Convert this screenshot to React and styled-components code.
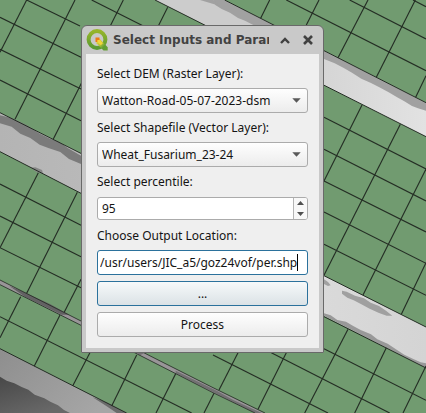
import React from "react";
import styled, { createGlobalStyle, css } from "styled-components";

const GlobalStyle = createGlobalStyle`
  html, body, #root { margin: 0; height: 100%; }
  body { overflow: hidden; background: #719b70; }
  *, *::before, *::after { box-sizing: border-box; }
`;

const Desktop = styled.div`
  position: relative;
  isolation: isolate;
  min-height: 100%;
  padding: 25px 102px 60px 81px;
  font: 12px/17px "Noto Sans", sans-serif;
  color: #141414;
`;

const MapCanvas = styled.svg`
  position: absolute;
  inset: 0;
  z-index: -1;
  width: 100%;
  height: 100%;
  background: #719b70;
`;

const Dialog = styled.form`
  display: flex;
  flex-direction: column;
  padding: 0 4px 4px;
  border: 1px solid #696969;
  border-radius: 6px 6px 1px 1px;
  background: #c9c9c9;
`;

const TitleBar = styled.header`
  display: flex;
  align-items: center;
  height: 28px;
`;

const Logo = styled.svg`
  flex: none;
  width: 22px;
  height: 22px;
`;

const Title = styled.h1`
  flex: 1;
  min-width: 0;
  margin: 0 4px 0 5px;
  overflow: hidden;
  white-space: nowrap;
  font: bold 12px/18px "DejaVu Sans", sans-serif;
  color: #424242;
`;

const WindowButton = styled.button`
  display: flex;
  align-items: center;
  justify-content: center;
  width: 23px;
  height: 22px;
  padding: 0;
  border: 0;
  background: none;
  color: #414141;
`;

const Content = styled.div`
  display: flex;
  flex-direction: column;
  gap: 6px;
  padding: 11px;
  background: #efefef;
`;

const Label = styled.label`
  height: 17px;
  white-space: nowrap;
`;

const frame = css`
  border: 1px solid #ababab;
  border-radius: 3px;
  font: inherit;
  color: inherit;
  outline: none;
`;

const SelectBox = styled.div`
  position: relative;
  display: flex;
`;

const Select = styled.select`
  ${frame}
  flex: 1;
  min-width: 0;
  height: 25px;
  padding: 0 24px 0 4px;
  appearance: none;
  background: linear-gradient(#fefefe, #ececec);
`;

const SelectArrow = styled.svg`
  position: absolute;
  right: 7px;
  top: 10px;
  width: 9px;
  height: 5px;
  pointer-events: none;
`;

const SpinBox = styled.div`
  ${frame}
  display: flex;
  height: 23px;
  margin: 1px 0;
  overflow: hidden;
  background: #fff;
`;

const SpinInput = styled.input`
  flex: 1;
  min-width: 0;
  padding: 0 4px;
  border: 0;
  background: none;
  font: inherit;
  color: inherit;
  outline: none;
`;

const SpinButtons = styled.div`
  display: flex;
  flex-direction: column;
  width: 14px;
  border-left: 1px solid #b4b4b4;
  background: #f8f8f8;
`;

const SpinButton = styled.button`
  display: flex;
  flex: 1;
  align-items: center;
  justify-content: center;
  padding: 0;
  border: 0;
  background: none;
`;

const PathBox = styled.div`
  position: relative;
  display: flex;
`;

const PathInput = styled.input`
  ${frame}
  flex: 1;
  min-width: 0;
  height: 25px;
  padding: 0 2px;
  border-color: #2b719c;
  background: #fff;
  caret-color: transparent;
`;

const Caret = styled.span`
  position: absolute;
  top: 4px;
  right: 10px;
  width: 1px;
  height: 17px;
  background: #000;
`;

const Button = styled.button`
  ${frame}
  height: 25px;
  padding: 0;
  text-align: center;
  background: ${(p) =>
    p.$active ? "linear-gradient(#f6f9fa, #dbe2e6)" : "linear-gradient(#fefefe, #ececec)"};
  border-color: ${(p) => (p.$active ? "#2b719c" : "#ababab")};
`;

// Plot grid lines, three units per pixel: [x1, y1, x2, y2]
const gridLines = [
  // west field, along the rows
  [80, 0, 240, 78], [275, 0, 430, 78], [0, 52, 243, 172], [0, 148, 243, 267], [0, 240, 243, 362],
  // west field, across
  [80, 0, 0, 157], [225, 0, 45, 358], [370, 0, 160, 417], [503, 22, 470, 88],
  // north-east field
  [859, 0, 1278, 212], [1049, 0, 1278, 117], [1239, 0, 1278, 20],
  [809, 0, 782, 55], [957, 0, 919, 75], [1104, 0, 1014, 173], [1246, 0, 1129, 232], [1278, 227, 1247, 292],
  // east field
  [972, 352, 1278, 507], [972, 448, 1278, 603], [972, 543, 1278, 696], [972, 636, 1278, 790], [972, 733, 1278, 886],
  [1086, 315, 972, 543], [1201, 373, 972, 826], [1278, 507, 1089, 885], [1278, 788, 1204, 943],
  // south-west field
  [0, 552, 243, 676], [0, 648, 243, 770], [0, 743, 243, 863],
  [115, 518, 0, 743], [232, 577, 80, 880], [243, 838, 193, 936],
  // south-east field
  [639, 1065, 984, 1239], [814, 1058, 1169, 1239], [972, 1046, 1278, 1201],
  [714, 1058, 657, 1170], [859, 1058, 774, 1228], [1044, 988, 914, 1239], [1159, 1043, 1064, 1239], [1278, 1098, 1209, 1239],
  // southern strip
  [0, 950, 575, 1239],
  [62, 890, 0, 1013], [180, 945, 103, 1098], [300, 1000, 218, 1158], [410, 1065, 335, 1218], [527, 1121, 468, 1239], [642, 1180, 612, 1239],
];

const FieldMap = () => (
  <MapCanvas viewBox="0 0 1278 1239" preserveAspectRatio="xMinYMin slice" aria-hidden="true">
    <defs>
      <linearGradient id="northTrack"><stop offset=".35" stopColor="#ccc" /><stop offset="1" stopColor="#e2e2e2" /></linearGradient>
      <linearGradient id="midTrack"><stop offset="0" stopColor="#b4b4b4" /><stop offset=".2" stopColor="#b9b9b9" /><stop offset=".75" stopColor="#dadada" /><stop offset="1" stopColor="#d4d4d4" /></linearGradient>
      <linearGradient id="corner" x1="0" y1="0" x2="1" y2=".5"><stop offset="0" stopColor="#8e8e8e" /><stop offset="1" stopColor="#a6a6a6" /></linearGradient>
      <linearGradient id="shade" x1="0" y1="0" x2=".6" y2="1"><stop offset="0" stopColor="#484848" /><stop offset="1" stopColor="#686868" /></linearGradient>
    </defs>
    <path d="M465 0H674L1278 308V410Z" fill="url(#northTrack)" />
    <path d="M639 0H674L1278 308V332L1254 325 1236 318 1213 304 1190 291 1166 277 1138 262 1113 249 1084 236 1056 218 1030 203 1004 190 972 177 760 75 735 62 714 54 690 38 665 27 646 15Z" fill="#a1a1a1" />
    <path d="M600 0H639L660 18Z" fill="#a1a1a1" />
    <path d="M0 338 243 460 972 827 1278 981V1103L972 947 243 580 0 455Z" fill="url(#midTrack)" />
    <path d="M0 346 35 354 80 375 116 399 150 416 176 424 203 444 243 467V492L207 477 181 456 145 444 119 434 91 414 61 401 35 380 0 370Z" fill="#7b7b7b" />
    <path d="M91 503 106 502 126 510 130 523 111 517Z" fill="#878787" />
    <path d="M972 838 984 846 992 856 984 858 972 852ZM1026 872 1040 875 1065 887 1092 895 1112 908 1137 918 1158 932 1177 947 1160 947 1137 939 1109 926 1084 913 1061 901 1042 893 1026 881Z" fill="#a0a0a0" />
    <path d="M972 947V940L992 946 1012 960 1038 965 1061 979 1082 990 1113 1003 1132 1018 1163 1031 1190 1049 1213 1064 1240 1077 1262 1087 1278 1090V1105Z" fill="#999" />
    <path d="M0 840 243 963 639 1163 792 1239H765L639 1178 243 976 0 854Z" fill="#999598" />
    <path d="M28 858 65 873 150 912 208 944 185 944 75 890Z" fill="#636163" />
    <path d="M400 1050 432 1060 420 1066ZM527 1112 650 1172 700 1200 785 1239H765L527 1120Z" fill="#727072" />
    <path d="M0 1046 380 1239H0Z" fill="url(#corner)" />
    <path d="M0 1130 20 1142 43 1150 65 1161 85 1169 104 1184 133 1195 151 1205 174 1216 192 1230 210 1239H0Z" fill="url(#shade)" />
    <path d="M278 1192 320 1207 380 1239H350L320 1219Z" fill="#6b6b6b" />
    <g stroke="#242d24" strokeWidth="3.4" fill="none">
      <path d="M465 0 1278 410M674 0 1278 308M0 338 1278 981M0 455 243 580 972 950 1278 1104M0 1046 380 1239" strokeWidth="3" />
      <path d="M0 840 243 963 639 1163 795 1239M0 854 243 976 639 1178 765 1239" strokeWidth="2.5" />
      {gridLines.map(([x1, y1, x2, y2]) => (
        <line key={`${x1}-${y1}-${x2}-${y2}`} x1={x1} y1={y1} x2={x2} y2={y2} />
      ))}
    </g>
  </MapCanvas>
);

const QgisLogo = () => (
  <Logo viewBox="0 0 22 22" aria-hidden="true">
    <defs>
      <linearGradient id="ring" x1="0" y1="0" x2="0" y2="1"><stop offset="0" stopColor="#96b52b" /><stop offset="1" stopColor="#5b9a32" /></linearGradient>
      <linearGradient id="tail" x1="0" y1="0" x2="1" y2="1"><stop offset="0" stopColor="#f4d936" /><stop offset=".4" stopColor="#b9c33a" /><stop offset=".65" stopColor="#5f9d35" /><stop offset="1" stopColor="#679f36" /></linearGradient>
    </defs>
    <circle cx="11" cy="10.5" r="8.4" fill="none" stroke="url(#ring)" strokeWidth="4" />
    <path d="M10.5 10.3h3.6l7.6 8v3.2h-4.2l-7-7.2z" fill="url(#tail)" />
    <path d="M9.5 8.5h4v2.5l-2 2h-2z" fill="#ee7913" />
    <path d="M11.4 11h2.4l3 3.2-2 2-3.4-3.4z" fill="#f2d43b" />
  </Logo>
);

const Dropdown = ({ id, value }) => (
  <SelectBox>
    <Select id={id} defaultValue={value}>
      <option>{value}</option>
    </Select>
    <SelectArrow viewBox="0 0 9 5"><path d="M.3.3h8.4L4.5 4.8z" fill="#595959" /></SelectArrow>
  </SelectBox>
);

export default function App() {
  return (
    <>
      <GlobalStyle />
      <Desktop>
        <FieldMap />
        <Dialog onSubmit={(e) => e.preventDefault()}>
          <TitleBar>
            <QgisLogo />
            <Title>Select Inputs and Parameters</Title>
            <WindowButton type="button" aria-label="Shade">
              <svg width="10" height="7" viewBox="0 0 10 7"><path d="M1 6 5 2l4 4" fill="none" stroke="currentColor" strokeWidth="2.4" /></svg>
            </WindowButton>
            <WindowButton type="button" aria-label="Close">
              <svg width="10" height="10" viewBox="0 0 10 10"><path d="m1 1 8 8M9 1 1 9" fill="none" stroke="currentColor" strokeWidth="2.6" /></svg>
            </WindowButton>
          </TitleBar>
          <Content>
            <Label htmlFor="dem">Select DEM (Raster Layer):</Label>
            <Dropdown id="dem" value="Watton-Road-05-07-2023-dsm" />
            <Label htmlFor="shapefile">Select Shapefile (Vector Layer):</Label>
            <Dropdown id="shapefile" value="Wheat_Fusarium_23-24" />
            <Label htmlFor="percentile">Select percentile:</Label>
            <SpinBox>
              <SpinInput id="percentile" inputMode="numeric" defaultValue="95" />
              <SpinButtons>
                <SpinButton type="button" aria-label="Increase">
                  <svg width="7" height="4" viewBox="0 0 7 4"><path d="M0 4h7L3.5 0z" fill="#4f4f4f" /></svg>
                </SpinButton>
                <SpinButton type="button" aria-label="Decrease">
                  <svg width="7" height="4" viewBox="0 0 7 4"><path d="M0 0h7L3.5 4z" fill="#4f4f4f" /></svg>
                </SpinButton>
              </SpinButtons>
            </SpinBox>
            <Label htmlFor="output">Choose Output Location:</Label>
            <PathBox>
              <PathInput id="output" defaultValue="/usr/users/JIC_a5/goz24vof/per.shp" />
              <Caret />
            </PathBox>
            <Button type="button" $active>...</Button>
            <Button type="submit">Process</Button>
          </Content>
        </Dialog>
      </Desktop>
    </>
  );
}
